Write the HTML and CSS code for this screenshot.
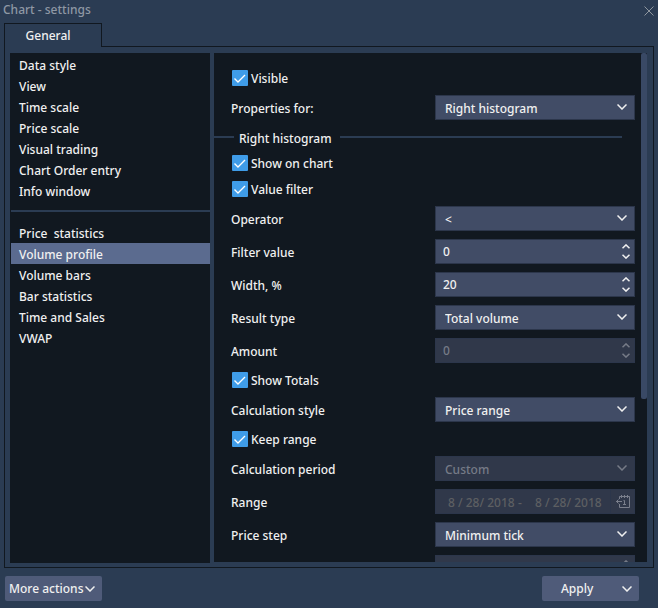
FILE: index.html
```html
<!DOCTYPE html>
<html lang="en">
<head>
<meta charset="utf-8">
<title>Chart - settings</title>
<link rel="stylesheet" href="styles.css">
</head>
<body>
<svg class="defs" aria-hidden="true">
  <symbol id="chevron" viewBox="0 0 10 6"><path d="M.5 .5 5 5 9.5 .5" fill="none" stroke="currentColor" stroke-width="1.5"/></symbol>
  <symbol id="up" viewBox="0 0 8 5"><path d="M.5 4.300 4 .9 7.500 4.300" fill="none" stroke="currentColor" stroke-width="1.500"/></symbol>
  <symbol id="down" viewBox="0 0 8 5"><path d="M.5 .7 4 4.100 7.500 .7" fill="none" stroke="currentColor" stroke-width="1.500"/></symbol>
</svg>
<main class="window">
  <header class="titlebar">
    <h1>Chart - settings</h1>
    <button class="close" aria-label="Close"><svg width="10" height="10" viewBox="0 0 10 10"><path d="M.5 .5l9 9M9.500 .5l-9 9" stroke="currentColor" fill="none"/></svg></button>
  </header>
  <div class="tabs"><button class="tab">General</button></div>
  <section class="panel">
    <nav class="sidebar">
      <a href="#">Data style</a>
      <a href="#">View</a>
      <a href="#">Time scale</a>
      <a href="#">Price scale</a>
      <a href="#">Visual trading</a>
      <a href="#">Chart Order entry</a>
      <a href="#">Info window</a>
      <hr>
      <a href="#">Price&nbsp; statistics</a>
      <a href="#" class="selected">Volume profile</a>
      <a href="#">Volume bars</a>
      <a href="#">Bar statistics</a>
      <a href="#">Time and Sales</a>
      <a href="#">VWAP</a>
    </nav>
    <div class="content">
      <form class="form">
        <label class="check"><input type="checkbox" checked><span>Visible</span></label>
        <div class="field"><label for="target">Properties for:</label>
          <div class="control"><select id="target"><option>Right histogram</option></select><svg class="arrow"><use href="#chevron"/></svg></div></div>
        <h2 class="group"><span>Right histogram</span></h2>
        <label class="check"><input type="checkbox" checked><span>Show on chart</span></label>
        <label class="check"><input type="checkbox" checked><span>Value filter</span></label>
        <div class="field"><label for="operator">Operator</label>
          <div class="control"><select id="operator"><option>&lt;</option></select><svg class="arrow"><use href="#chevron"/></svg></div></div>
        <div class="field"><label for="filter">Filter value</label>
          <div class="control"><input id="filter" type="text" value="0"><span class="spin"><button type="button" aria-label="Increase"><svg><use href="#up"/></svg></button><button type="button" aria-label="Decrease"><svg><use href="#down"/></svg></button></span></div></div>
        <div class="field"><label for="width">Width, %</label>
          <div class="control"><input id="width" type="text" value="20"><span class="spin"><button type="button" aria-label="Increase"><svg><use href="#up"/></svg></button><button type="button" aria-label="Decrease"><svg><use href="#down"/></svg></button></span></div></div>
        <div class="field"><label for="result">Result type</label>
          <div class="control"><select id="result"><option>Total volume</option></select><svg class="arrow"><use href="#chevron"/></svg></div></div>
        <div class="field"><label for="amount">Amount</label>
          <div class="control disabled"><input id="amount" type="text" value="0" disabled><span class="spin"><button type="button" disabled aria-label="Increase"><svg><use href="#up"/></svg></button><button type="button" disabled aria-label="Decrease"><svg><use href="#down"/></svg></button></span></div></div>
        <label class="check"><input type="checkbox" checked><span>Show Totals</span></label>
        <div class="field"><label for="style">Calculation style</label>
          <div class="control"><select id="style"><option>Price range</option></select><svg class="arrow"><use href="#chevron"/></svg></div></div>
        <label class="check"><input type="checkbox" checked><span>Keep range</span></label>
        <div class="field"><label for="period">Calculation period</label>
          <div class="control disabled"><select id="period" disabled><option>Custom</option></select><svg class="arrow"><use href="#chevron"/></svg></div></div>
        <div class="field"><label for="from">Range</label>
          <div class="control disabled dates"><input id="from" type="text" value="8 / 28/ 2018" disabled><span>-</span><input type="text" value="8 / 28/ 2018" aria-label="Range end" disabled>
            <button type="button" class="calendar" disabled aria-label="Pick dates"><svg width="14" height="13" viewBox="0 0 14 13" fill="none" stroke="currentColor"><path d="M3.500 4V1.500h10v11h-10V9M5.500 0v3M8.500 0v3M11.500 0v3M0 6.500h6M2.500 4.500l-2 2 2 2M7.500 5.500h1V10M7 9.500h3"/></svg></button></div></div>
        <div class="field"><label for="step">Price step</label>
          <div class="control"><select id="step"><option>Minimum tick</option></select><svg class="arrow"><use href="#chevron"/></svg></div></div>
        <div class="field"><label for="custom"></label>
          <div class="control disabled"><input id="custom" type="text" disabled aria-label="Custom step"><span class="spin"><button type="button" disabled aria-label="Increase"><svg><use href="#up"/></svg></button><button type="button" disabled aria-label="Decrease"><svg><use href="#down"/></svg></button></span></div></div>
      </form>
      <div class="thumb"></div>
    </div>
  </section>
  <footer class="footer">
    <button class="btn">More actions<svg><use href="#chevron"/></svg></button>
    <button class="btn apply"><span>Apply</span><svg><use href="#chevron"/></svg></button>
  </footer>
</main>
</body>
</html>
```
FILE: styles.css
```css
:root {
  --frame: #2b3c53;
  --dark: #111820;
  --text: #f0f0f0;
  --control: #414c66;
  --line: #2c364b;
}
* { box-sizing: border-box; }
body {
  margin: 0;
  background: var(--frame);
  color: var(--text);
  font: 500 12px/20px "Trebuchet MS", "Noto Sans", sans-serif;
}
button, input, select { font: inherit; color: inherit; margin: 0; }
button { background: none; border: 0; padding: 0; }
h1, h2 { font: inherit; margin: 0; }
.defs { position: absolute; width: 0; height: 0; }

.window { display: flex; flex-direction: column; height: 100vh; }
.titlebar {
  display: flex;
  justify-content: space-between;
  height: 23px;
  padding: 0 4px 0 3px;
  color: #8f98a5;
}
.close { display: flex; align-items: center; height: 21px; color: #8f979f; }

.tabs { padding-left: 4px; }
.tab {
  position: relative;
  display: block;
  width: 98px;
  height: 24px;
  margin-bottom: -1px;
  padding-right: 10px;
  border: 1px solid var(--dark);
  border-bottom: 0;
  background: var(--frame);
}
.panel {
  display: flex;
  gap: 4px;
  flex: 1;
  min-height: 0;
  margin: 0 4px 0 4px;
  padding: 6px 6px 4px 5px;
  border: 1px solid var(--dark);
}
.sidebar {
  width: 200px;
  padding: 1px 0 0 1px;
  background: var(--dark);
}
.sidebar a {
  display: block;
  padding: 3px 8px 0;
  line-height: 18px;
  color: inherit;
  text-decoration: none;
}
.sidebar .selected { background: #5b6b8f; }
.sidebar hr { height: 2px; margin: 9px 0 10px; border: 0; background: var(--frame); }

.content {
  position: relative;
  flex: 1;
  margin-bottom: 1px;
  overflow: hidden;
  background: var(--dark);
}
.form { padding-top: 12px; }
.thumb {
  position: absolute;
  top: 0;
  right: 0;
  width: 6px;
  height: 68%;
  border-radius: 2px;
  background: #394965;
}
.check {
  display: flex;
  align-items: center;
  gap: 3px;
  height: 26px;
  padding-left: 18px;
}
.check span, .field > label { padding-top: 2px; }
.check input {
  appearance: none;
  width: 16px;
  height: 16px;
  border-radius: 1px;
  background: #3f9ce8 url('data:image/svg+xml,<svg xmlns="http://www.w3.org/2000/svg" viewBox="0 0 16 16"><path d="M2.500 8.500 6 12l7-7" fill="none" stroke="white" stroke-width="1.400"/></svg>');
}
.field {
  display: flex;
  align-items: center;
  justify-content: space-between;
  height: 33px;
  padding: 0 12px 0 17px;
}
.control {
  position: relative;
  display: flex;
  width: 200px;
  height: 25px;
  border: 1px solid var(--line);
  background: var(--control);
}
.control select {
  appearance: none;
  width: 100%;
  padding: 3px 24px 0 9px;
  border: 0;
  background: none;
  opacity: 1;
}
.control input {
  flex: 1;
  min-width: 0;
  padding: 0 7px;
  border: 0;
  background: none;
}
.arrow {
  position: absolute;
  top: 8px;
  right: 7px;
  width: 10px;
  height: 6px;
  pointer-events: none;
}
.spin {
  display: flex;
  flex-direction: column;
  justify-content: space-between;
  width: 12px;
  padding: 4px 0;
}
.spin button { display: flex; }
.spin svg { width: 8px; height: 5px; }
.disabled { background: #30384a; color: #767b87; }
.dates { color: #5d5f62; }
.control.dates input { flex: none; width: 82px; padding: 2px 0 0 12px; }
.dates span { width: 5px; padding-top: 2px; line-height: 21px; }
.calendar {
  display: grid;
  place-items: center;
  flex: 1;
  margin-left: 5px;
  border-left: 1px solid var(--line);
  color: #7a7f8c;
}
.group {
  display: flex;
  align-items: center;
  height: 26px;
  padding-right: 25px;
}
.group span { padding-top: 4px; }
.group::before, .group::after {
  content: "";
  width: 20px;
  height: 2px;
  margin-right: 5px;
  background: var(--frame);
}
.group::after { flex: 1; margin: 0 0 0 8px; }

.footer {
  display: flex;
  justify-content: space-between;
  padding: 8px 19px 7px 5px;
}
.btn {
  display: flex;
  align-items: center;
  justify-content: space-between;
  width: 97px;
  height: 25px;
  padding: 0 7px 0 4px;
  border-radius: 2px;
  background: #4f5b79;
}
.btn svg { width: 10px; height: 6px; }
.apply { padding-left: 19px; }
```
